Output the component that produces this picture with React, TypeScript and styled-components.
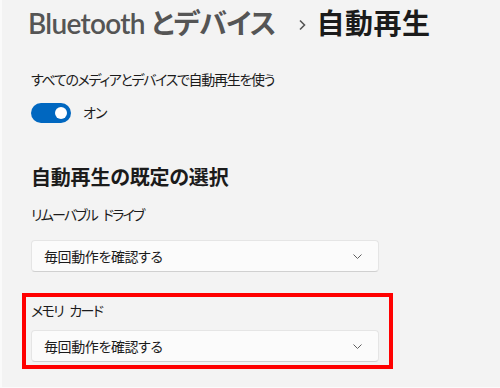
import styled, { createGlobalStyle } from 'styled-components';

const GlobalStyle = createGlobalStyle`
  html, body {
    margin: 0;
    padding: 0;
    background: #f3f3f3;
  }
  body {
    font-family: "Noto Sans", "Noto Sans CJK JP", sans-serif;
    color: #1b1b1b;
    font-feature-settings: "palt";
  }
`;

const Page = styled.main`
  box-sizing: border-box;
  width: 500px;
  height: 388px;
  overflow: hidden;
  border-left: 2px solid #fafafa;
  border-bottom: 1px solid #fafafa;
  padding: 3px 0 0 26px;
  display: flex;
  flex-direction: column;
`;

const Breadcrumb = styled.h1`
  margin: 0;
  display: flex;
  align-items: center;
  font-family: "Lato", "Noto Sans CJK JP", sans-serif;
  font-size: 28px;
  line-height: 40px;
  font-weight: 600;
`;

const Crumb = styled.span<{ $current?: boolean }>`
  color: ${(p) => (p.$current ? '#1b1b1b' : '#555555')};
  letter-spacing: ${(p) => (p.$current ? '0.5px' : '-0.7px')};
`;

const Chevron = styled.svg`
  width: 8px;
  height: 12px;
  margin: 3px 11px 0 22px;
`;

const Body = styled.div`
  padding-left: 3px;
  display: flex;
  flex-direction: column;
`;

const Text = styled.div<{ $top?: number; $tight?: number }>`
  margin-top: ${(p) => p.$top ?? 0}px;
  font-size: 14px;
  line-height: 20px;
  letter-spacing: ${(p) => p.$tight ?? 0}px;
  word-spacing: 4px;
`;

const ToggleRow = styled.label`
  margin-top: 13px;
  display: flex;
  align-items: center;
  gap: 12px;
  font-size: 14px;
  line-height: 20px;
  letter-spacing: -0.8px;
`;

const Switch = styled.span<{ $on: boolean }>`
  box-sizing: border-box;
  width: 40px;
  height: 20px;
  border-radius: 10px;
  background: ${(p) => (p.$on ? '#0067c0' : 'transparent')};
  display: flex;
  align-items: center;
  justify-content: ${(p) => (p.$on ? 'flex-end' : 'flex-start')};
  padding: 0 4px;

  &::after {
    content: '';
    width: 12px;
    height: 12px;
    border-radius: 50%;
    background: #fff;
  }
`;

const SectionTitle = styled.h2`
  margin: 41px 0 0;
  font-size: 20px;
  line-height: 28px;
  font-weight: 600;
  letter-spacing: -0.2px;
`;

const Select = styled.button`
  box-sizing: border-box;
  margin-top: 15px;
  width: 348px;
  height: 32px;
  padding: 0 16px 0 12px;
  display: flex;
  align-items: center;
  justify-content: space-between;
  background: #fbfbfb;
  border: 1px solid #e5e5e5;
  border-bottom-color: #d0d0d0;
  border-radius: 4px;
  font: inherit;
  font-size: 14px;
  letter-spacing: -0.4px;
  color: #1b1b1b;
  text-align: left;
`;

const Caret = styled.svg`
  width: 9px;
  height: 5px;
`;

const Highlight = styled.section`
  box-sizing: border-box;
  margin: 21px 0 0 -9px;
  width: 371px;
  border: 4px solid #ff0000;
  padding: 4px 0 3px 5px;
  display: flex;
  flex-direction: column;

  & > button {
    margin-top: 9px;
  }
`;

const Dropdown = ({ value }: { value: string }) => (
  <Select type="button">
    <span>{value}</span>
    <Caret viewBox="0 0 9 5">
      <path d="M0.5 0.5 L4.5 4.5 L8.5 0.5" fill="none" stroke="#606060" strokeWidth="1" />
    </Caret>
  </Select>
);

const App = () => (
  <>
    <GlobalStyle />
    <Page>
      <Breadcrumb>
        <Crumb>Bluetooth とデバイス</Crumb>
        <Chevron viewBox="0 0 8 12">
          <path d="M2 1.5 L6.5 6 L2 10.5" fill="none" stroke="#555555" strokeWidth="1.6" />
        </Chevron>
        <Crumb $current>自動再生</Crumb>
      </Breadcrumb>
      <Body>
        <Text $top={27} $tight={-1.3}>
          すべてのメディアとデバイスで自動再生を使う
        </Text>
        <ToggleRow>
          <Switch $on />
          オン
        </ToggleRow>
        <SectionTitle>自動再生の既定の選択</SectionTitle>
        <Text $top={13} $tight={-1.8}>
          リムーバブル ドライブ
        </Text>
        <Dropdown value="毎回動作を確認する" />
        <Highlight>
          <Text $tight={-1.6}>メモリ カード</Text>
          <Dropdown value="毎回動作を確認する" />
        </Highlight>
      </Body>
    </Page>
  </>
);

export default App;
